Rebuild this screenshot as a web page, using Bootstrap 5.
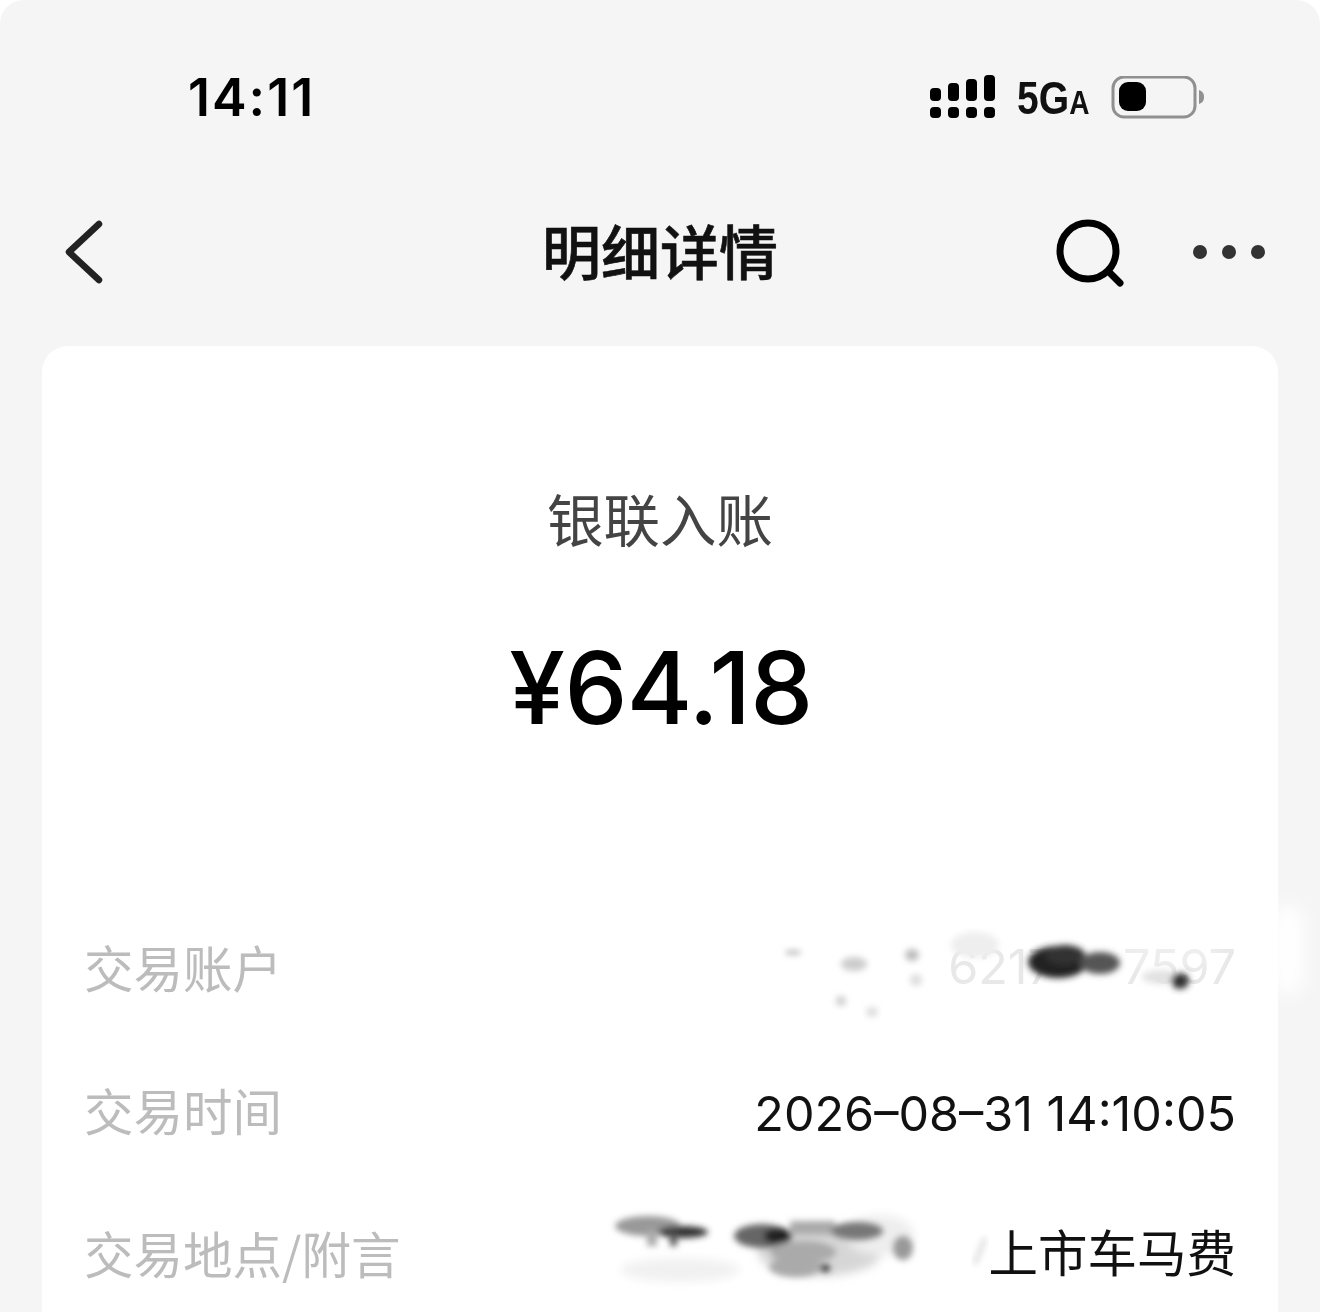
<!DOCTYPE html>
<html lang="zh">
<head>
<meta charset="utf-8">
<title>明细详情</title>
<link href="https://cdn.jsdelivr.net/npm/bootstrap@5.3.0/dist/css/bootstrap.min.css" rel="stylesheet">
<style>
html,body{margin:0;height:1312px;overflow:hidden;background:#fff}
body{font-family:"Inter","Noto Sans CJK SC",sans-serif;color:#000}
.phone{height:1312px;background:#f5f5f5;border-radius:24px 24px 0 0;overflow:hidden}
.statusbar{height:176px;padding:62px 115px 0 188px;align-items:flex-start}
.clock{font-size:52px;font-weight:600;line-height:72px;letter-spacing:2px}
.signalicon{margin-right:20px}
.net{width:94px;font-family:"Liberation Sans",sans-serif;font-weight:700;font-size:46px;line-height:50px;color:#111;transform:scaleX(.85);transform-origin:left center;white-space:nowrap}
.net span{font-size:33px}
.netbox{width:72px;height:50px;margin-right:22px}
.titlebar{height:152px;padding:0 54px 0 64px;margin-bottom:18px}
.pagetitle{font-family:"Noto Sans CJK SC",sans-serif;font-size:59px;font-weight:500;-webkit-text-stroke:.6px #111;line-height:1;color:#111;margin:0;margin-top:-3px}
.searchicon{margin-top:4px}
.sheet{background:#fff;margin:0 42px;border-radius:26px 26px 0 0;height:966px;padding:0 42px}
.kind{font-family:"Noto Sans CJK SC",sans-serif;font-size:56.5px;color:#444;text-align:center;padding-top:134px;line-height:74px}
.amount{font-size:100px;font-weight:500;text-align:center;line-height:120px;margin-top:74px;letter-spacing:-.6px;padding-left:2px}
.inforows{margin-top:147px}
.inforow{height:143px;align-items:center;justify-content:space-between;line-height:60px}
.lbl{font-family:"Noto Sans CJK SC",sans-serif;color:#bcbcbc;font-size:49.5px}
.val{font-size:48.5px;color:#111;padding-top:8px}
.val-cjk{font-family:"Noto Sans CJK SC",sans-serif;font-size:49.5px;padding-top:0;padding-bottom:4px}
.acct{color:#e8e8e8;padding-top:0}
.acct-gap{display:inline-block;width:68px}
.smudges{position:absolute;left:0;top:0;pointer-events:none}
</style>
</head>
<body>
<div class="phone position-relative">
  <div class="statusbar d-flex justify-content-between">
    <div class="clock">14:11</div>
    <div class="d-flex align-items-center" style="height:72px">
      <svg class="signalicon" width="68" height="46" viewBox="0 0 68 46"><g fill="#000"><rect x="1" y="13" width="11" height="13" rx="4"/><rect x="1" y="32" width="11" height="11" rx="4"/><rect x="19" y="8" width="11" height="18" rx="4"/><rect x="19" y="32" width="11" height="11" rx="4"/><rect x="37" y="4" width="11" height="22" rx="4"/><rect x="37" y="32" width="11" height="11" rx="4"/><rect x="55" y="0" width="11" height="26" rx="4"/><rect x="55" y="32" width="11" height="11" rx="4"/></g></svg>
      <div class="netbox"><div class="net">5G<span>A</span></div></div>
      <svg width="94" height="44" viewBox="0 0 94 44"><rect x="2" y="1" width="82" height="40" rx="11" fill="none" stroke="#909090" stroke-width="3"/><rect x="8" y="6" width="27" height="29" rx="9" fill="#000"/><path d="M88 14c3 1 5 3 5 7s-2 6-5 7z" fill="#909090"/></svg>
    </div>
  </div>
  <div class="titlebar d-flex align-items-center justify-content-between position-relative">
    <svg width="40" height="66" viewBox="0 0 40 66"><path d="M35 5 5 33l30 28" fill="none" stroke="#222" stroke-width="6.5" stroke-linecap="round" stroke-linejoin="round"/></svg>
    <h1 class="pagetitle position-absolute top-50 start-50 translate-middle">明细详情</h1>
    <div class="d-flex align-items-center" style="gap:66px">
      <svg class="searchicon" width="70" height="70" viewBox="0 0 70 70"><circle cx="32" cy="32" r="28" fill="none" stroke="#000" stroke-width="7"/><path d="M53 53l11 11" stroke="#000" stroke-width="7" stroke-linecap="round"/></svg>
      <svg width="74" height="16" viewBox="0 0 74 16"><g fill="#333"><circle cx="8" cy="8" r="7"/><circle cx="37" cy="8" r="7"/><circle cx="66" cy="8" r="7"/></g></svg>
    </div>
  </div>
  <div class="sheet">
    <div class="kind">银联入账</div>
    <div class="amount">¥64.18</div>
    <div class="inforows">
      <div class="inforow d-flex"><span class="lbl">交易账户</span><span class="val acct">6217<i class="acct-gap"></i>7597</span></div>
      <div class="inforow d-flex"><span class="lbl">交易时间</span><span class="val">2026–08–31 14:10:05</span></div>
      <div class="inforow d-flex"><span class="lbl">交易地点/附言</span><span class="val val-cjk">上市车马费</span></div>
    </div>
  </div>
  <svg class="smudges" width="1320" height="1312" viewBox="0 0 1320 1312">
    <defs>
      <filter id="b2" x="-40%" y="-40%" width="180%" height="180%"><feGaussianBlur stdDeviation="3"/></filter>
      <filter id="b4" x="-40%" y="-40%" width="180%" height="180%"><feGaussianBlur stdDeviation="5"/></filter>
      <filter id="b10" x="-40%" y="-40%" width="180%" height="180%"><feGaussianBlur stdDeviation="10"/></filter>
    </defs>
    <g filter="url(#b10)" fill="#fff">
      <rect x="1272" y="905" width="32" height="90" rx="14"/>
      <rect x="1120" y="945" width="100" height="18" rx="9" opacity=".45"/>
    </g>
    <g filter="url(#b2)">
      <ellipse cx="975" cy="945" rx="24" ry="13" fill="#eee"/>
      <ellipse cx="1058" cy="962" rx="30" ry="16" fill="#222"/>
      <ellipse cx="1065" cy="955" rx="20" ry="10" fill="#333"/>
      <ellipse cx="1100" cy="963" rx="20" ry="11" fill="#555"/>
      <ellipse cx="1160" cy="977" rx="18" ry="7" fill="#e2e2e2"/>
      <ellipse cx="1180" cy="981" rx="9" ry="8" fill="#333"/>
      <ellipse cx="854" cy="964" rx="13" ry="7" fill="#ccc"/>
      <ellipse cx="912" cy="955" rx="7" ry="6" fill="#bbb"/>
      <ellipse cx="916" cy="980" rx="6" ry="6" fill="#ddd"/>
      <ellipse cx="841" cy="1001" rx="5" ry="5" fill="#ccc"/>
      <ellipse cx="872" cy="1012" rx="6" ry="5" fill="#ddd"/>
      <rect x="786" y="951" width="14" height="3" fill="#999"/>
    </g>
    <g filter="url(#b4)">
      <ellipse cx="820" cy="1252" rx="62" ry="24" fill="#ccc" opacity=".8"/>
      <ellipse cx="680" cy="1270" rx="60" ry="12" fill="#f1f1f1"/>
      <ellipse cx="880" cy="1235" rx="34" ry="20" fill="#eee"/>
    </g>
    <g filter="url(#b2)">
      <ellipse cx="648" cy="1226" rx="33" ry="10" fill="#999"/>
      <rect x="647" y="1230" width="10" height="16" fill="#aaa"/>
      <ellipse cx="683" cy="1232" rx="25" ry="6" fill="#333"/>
      <rect x="670" y="1232" width="7" height="14" fill="#555"/>
      <ellipse cx="762" cy="1236" rx="28" ry="12" fill="#666"/>
      <ellipse cx="778" cy="1236" rx="14" ry="8" fill="#222"/>
      <rect x="790" y="1221" width="45" height="14" fill="#aaa"/>
      <ellipse cx="857" cy="1231" rx="26" ry="9" fill="#777"/>
      <ellipse cx="903" cy="1248" rx="10" ry="12" fill="#999"/>
      <ellipse cx="803" cy="1252" rx="33" ry="11" fill="#aaa"/>
      <ellipse cx="795" cy="1267" rx="26" ry="10" fill="#aaa"/>
      <ellipse cx="825" cy="1268" rx="5" ry="4" fill="#333"/>
    </g>
    <path d="M985 1238l-10 26" stroke="#ccc" stroke-width="3" filter="url(#b2)"/>
  </svg>
</div>
</body>
</html>
